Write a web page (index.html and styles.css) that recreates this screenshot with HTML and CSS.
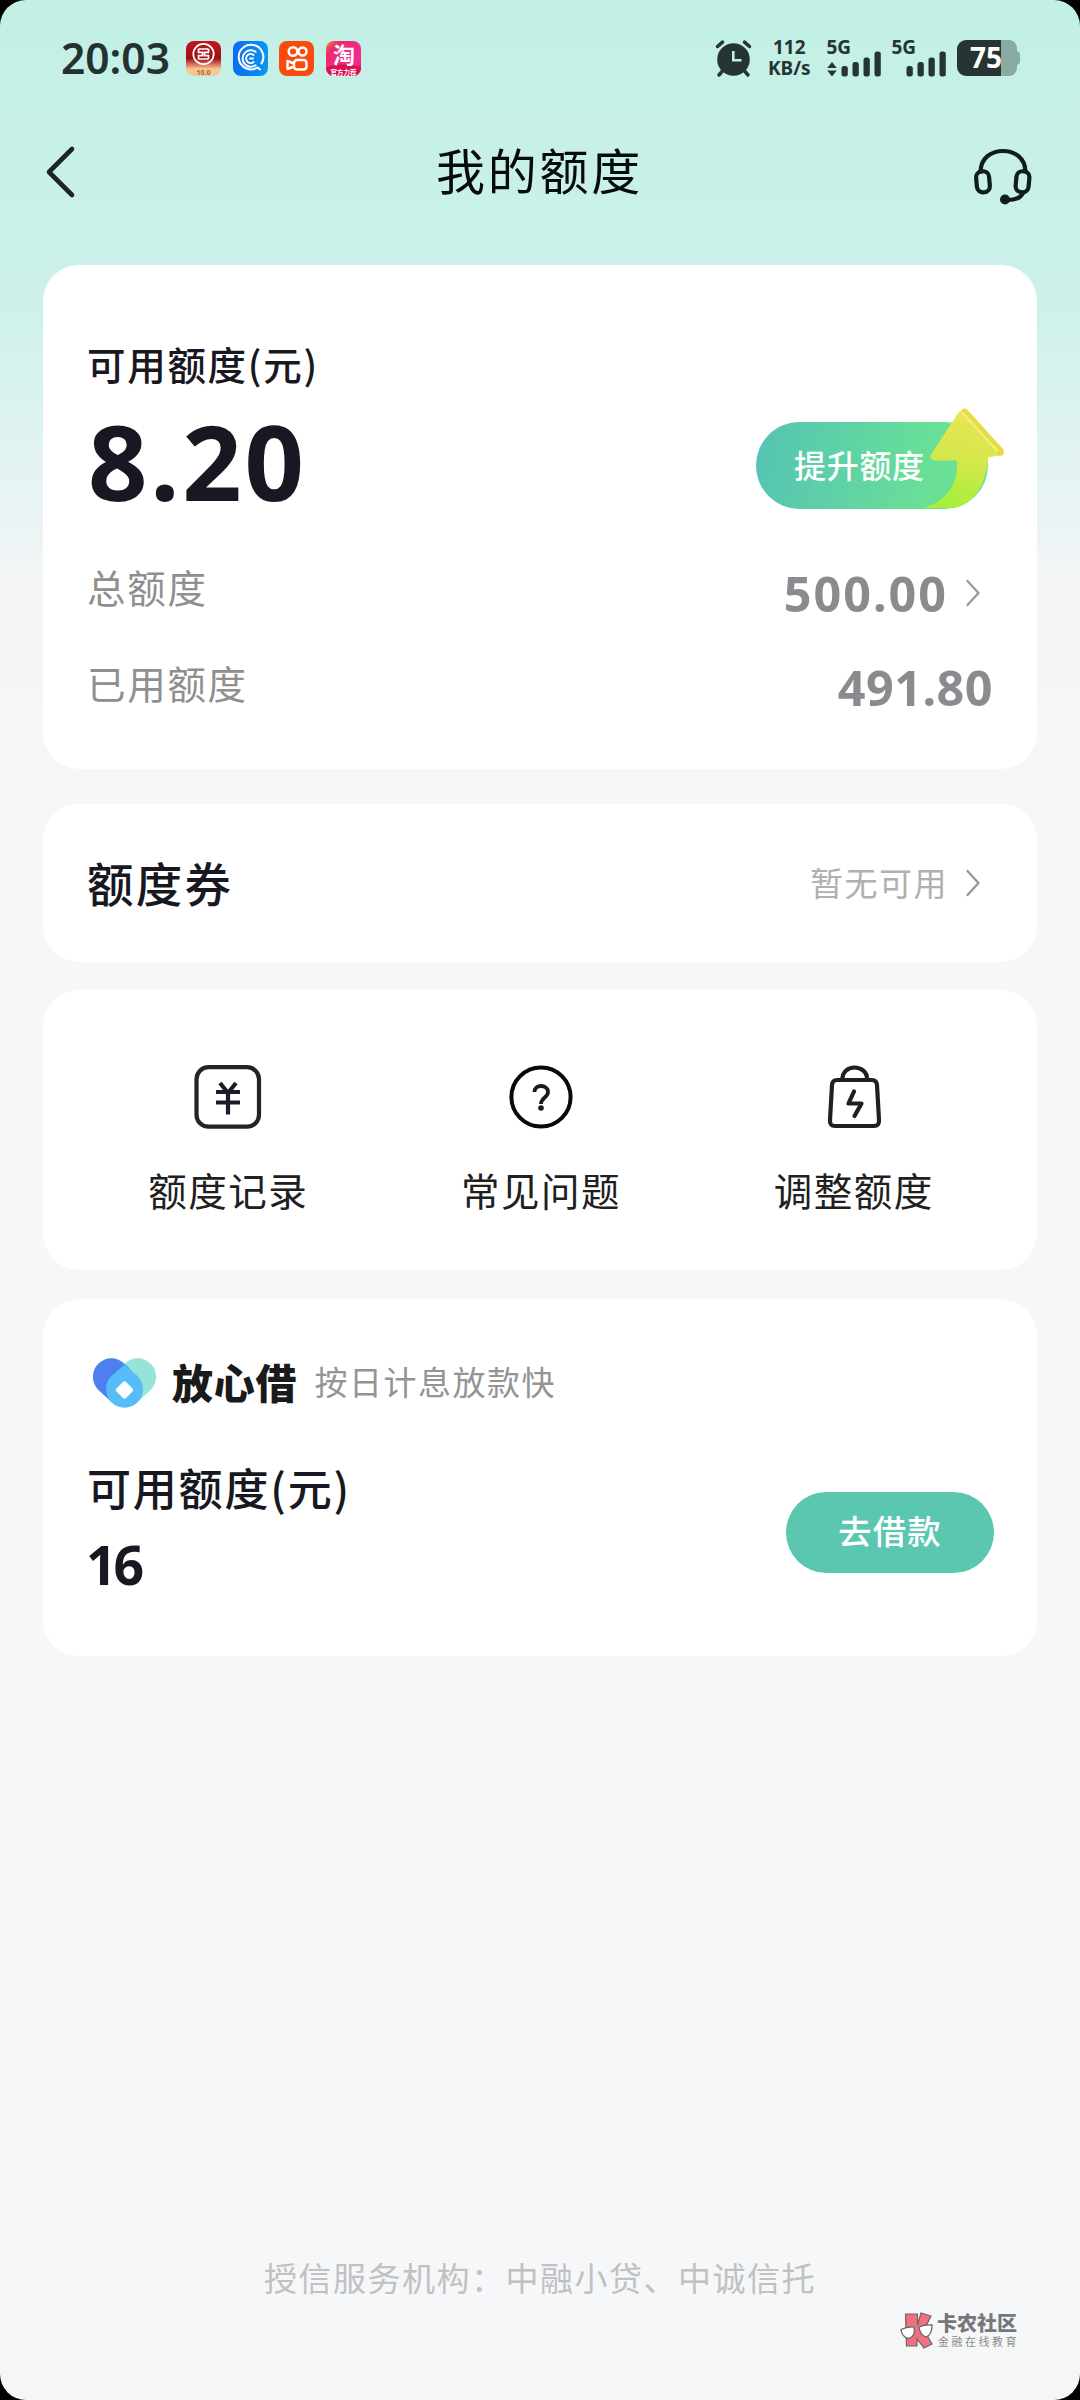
FILE: index.html
```html
<!DOCTYPE html>
<html lang="zh-CN">
<head>
<meta charset="utf-8">
<title>我的额度</title>
<link rel="stylesheet" href="styles.css">
</head>
<body>
<div class="backdrop">
<main class="screen">
  <header class="status">
    <span class="clock">20:03</span>
    <div class="apps">
      <svg class="app" viewBox="0 0 35 35">
        <defs>
          <linearGradient id="icbc" x1="0" y1="0" x2="0" y2="1"><stop offset="0" stop-color="#c3161d"/><stop offset=".5" stop-color="#9c1014"/><stop offset=".68" stop-color="#dd7a60"/><stop offset=".8" stop-color="#f6c795"/></linearGradient>
        </defs>
        <rect width="35" height="35" rx="8" fill="url(#icbc)"/>
        <circle cx="17.500" cy="13" r="10.200" fill="none" stroke="#fff" stroke-width="1.800"/>
        <path d="M12.500 8h10M12.500 18h10M12.500 8v3.400h4v3.200h-4V18M22.500 8v3.400h-4v3.200h4V18" fill="none" stroke="#fff" stroke-width="1.700"/>
        <text x="17.500" y="33.500" text-anchor="middle" class="app-badge">10.0</text>
      </svg>
      <svg class="app" viewBox="0 0 35 35">
        <defs><linearGradient id="blue"><stop offset="0" stop-color="#0a6cf0"/><stop offset="1" stop-color="#0b96ee"/></linearGradient></defs>
        <rect width="35" height="35" rx="8" fill="url(#blue)"/>
        <g fill="none" stroke="#fff" stroke-width="2" stroke-linecap="round">
          <path d="M27 28.500l-2.500-2A12.300 12.300 0 1 1 28.500 22.500"/>
          <path d="M22.500 10.800A8.200 8.200 0 1 0 22.500 24.200"/>
          <path d="M20.500 14A4.500 4.500 0 1 0 20.500 21M17 17.500h3"/>
        </g>
      </svg>
      <svg class="app" viewBox="0 0 35 35">
        <rect width="35" height="35" rx="8" fill="#fa4b0c"/>
        <g fill="none" stroke="#fff" stroke-width="2.500">
          <circle cx="14" cy="10.500" r="4.300"/><circle cx="23.500" cy="10.500" r="4"/>
          <rect x="15" y="19" width="12.500" height="9.500" rx="3"/>
          <path d="M15 22.500l-6.500-2.500v8l6.500-2.500" stroke-linejoin="round"/>
        </g>
      </svg>
      <svg class="app" viewBox="0 0 35 35">
        <defs><linearGradient id="tao" x1="0" y1="0" x2="1" y2="1"><stop offset="0" stop-color="#f08a4a"/><stop offset=".2" stop-color="#ee2a6c"/><stop offset=".75" stop-color="#f02a92"/><stop offset="1" stop-color="#e01050"/></linearGradient></defs>
        <rect width="35" height="35" rx="8" fill="url(#tao)"/>
        <path d="M0 26q17-5 35 0v1a8 8 0 0 1-8 8H8a8 8 0 0 1-8-8z" fill="#d9114f"/>
        <text x="18" y="21.500" text-anchor="middle" class="app-tao">淘</text>
        <text x="17.500" y="33.500" text-anchor="middle" class="app-tag">官方力荐</text>
      </svg>
    </div>
    <svg class="alarm" viewBox="0 0 37 37">
      <circle cx="18.500" cy="19.500" r="16.300" fill="#263432"/>
      <g stroke="#263432" stroke-width="3.500" stroke-linecap="round"><path d="M2.500 6.500L7.500 2.200M34.500 6.500L29.500 2.200M7 31.500L4 35M30 31.500L33 35"/></g>
      <path d="M18.300 11v9.300h8.200" fill="none" stroke="#c3f0e6" stroke-width="2.600"/>
    </svg>
    <div class="speed"><span>112</span><span>KB/s</span></div>
    <svg class="signal" viewBox="0 0 55 37" fill="#263432">
      <text x="-.5" y="14" class="net">5G</text>
      <path d="M5 22l4.800 6H.2zM5 36.500l4.800-6H.2z"/>
      <rect x="14.500" y="26" width="6.300" height="10.500" rx="2.500"/><rect x="25.500" y="22" width="6.300" height="14.500" rx="2.500"/><rect x="36.500" y="17.500" width="6.300" height="19" rx="2.500"/><rect x="47.500" y="11.500" width="6.300" height="25" rx="2.500"/>
    </svg>
    <svg class="signal second" viewBox="0 0 55 37" fill="#263432">
      <text x="-.5" y="14" class="net">5G</text>
      <rect x="14.500" y="26" width="6.300" height="10.500" rx="2.500"/><rect x="25.500" y="22" width="6.300" height="14.500" rx="2.500"/><rect x="36.500" y="17.500" width="6.300" height="19" rx="2.500"/><rect x="47.500" y="11.500" width="6.300" height="25" rx="2.500"/>
    </svg>
    <svg class="battery" viewBox="0 0 63 36">
      <path d="M44 0h8a8 8 0 0 1 8 8v3q3 1 3 3v8q0 2-3 3v3a8 8 0 0 1-8 8h-8z" fill="#88aba4"/>
      <path d="M44 0H9a9 9 0 0 0-9 9v18a9 9 0 0 0 9 9h35z" fill="#263432"/>
      <text x="29" y="28" text-anchor="middle" class="level">75</text>
    </svg>
  </header>

  <nav class="topbar">
    <svg class="back" viewBox="0 0 30 52"><path d="M26 3L3 26l23 23" fill="none" stroke="#1c2424" stroke-width="4.600" stroke-linecap="round" stroke-linejoin="round"/></svg>
    <h1>我的额度</h1>
    <svg class="service" viewBox="0 0 60 58">
      <g fill="none" stroke="#0f1c20" stroke-width="4.200" stroke-linecap="round">
        <path d="M7.500 23.500C8 10 18 3 30 3s22 7 22.500 20.500"/>
        <rect x="3.500" y="23.300" width="13" height="21" rx="6" transform="rotate(-5 10 34)"/>
        <rect x="43" y="23.300" width="13" height="21" rx="6" transform="rotate(5 50 34)"/>
        <path d="M50 45c-2.500 5-8 7-15 7"/>
      </g>
      <circle cx="32" cy="51.500" r="5" fill="#0f1c20"/>
    </svg>
  </nav>

  <section class="card quota">
    <h2>可用额度(元)</h2>
    <div class="hero">
      <strong>8.20</strong>
      <div class="raise">
        <span>提升额度</span>
        <svg class="raise-arrow" viewBox="0 0 84 104">
          <defs>
            <linearGradient id="arrow" x1=".6" y1="0" x2=".4" y2="1"><stop offset="0" stop-color="#ebe553"/><stop offset=".5" stop-color="#d3e84b"/><stop offset="1" stop-color="#a4f03a"/></linearGradient>
          </defs>
          <path d="M39 3.500q3-4 7 0L81 42q3 6-3 7L68 48Z" fill="#e6dc3e"/>
          <path d="M36.500 5.500q3-3 6 .5L75.500 43q2 5-4 6.500l-5 .5C64 79 50 101 28 101H1.500C22 95 38 78 34.500 53.500L12 53.500q-5-1-3-6Z" fill="url(#arrow)"/>
          <path d="M41 6.500L75 43.500" stroke="#f1ef86" stroke-width="2" stroke-linecap="round"/>
        </svg>
      </div>
    </div>
    <div class="line total"><span>总额度</span><b>500.00</b><svg class="chev" viewBox="0 0 14 28"><path d="M1.500 2L12.500 14l-11 12"/></svg></div>
    <div class="line used"><span>已用额度</span><b>491.80</b></div>
  </section>

  <section class="card coupon">
    <h3>额度券</h3><span>暂无可用</span><svg class="chev" viewBox="0 0 14 28"><path d="M1.500 2L12.500 14l-11 12"/></svg>
  </section>

  <section class="card tools">
    <div class="tool">
      <svg viewBox="0 0 68 66">
        <rect x="2.500" y="3.200" width="62.500" height="59.500" rx="12" fill="none" stroke="#242424" stroke-width="4.200"/>
        <path d="M26 19l8 10 8-10M22 28h24M22 38.500h24M34 28v22.500" fill="none" stroke="#1b1b2b" stroke-width="4.200"/>
      </svg>
      <span>额度记录</span>
    </div>
    <div class="tool">
      <svg viewBox="0 0 68 66">
        <circle cx="34" cy="33" r="29.600" fill="none" stroke="#080808" stroke-width="4"/>
        <path d="M27.500 28c0-4 3-6 6.500-6s7 2.200 7 6c0 5.500-7 5.500-7 12" fill="none" stroke="#191923" stroke-width="3.800"/><circle cx="34" cy="44" r="2.800" fill="#191923"/>
      </svg>
      <span>常见问题</span>
    </div>
    <div class="tool">
      <svg viewBox="0 0 68 66" fill="none" stroke="#202020" stroke-width="4.200" stroke-linecap="round" stroke-linejoin="round">
        <path d="M22.500 15.500C22 8 28 3.500 34.500 3.500S47.500 8 47 15.500"/>
        <path d="M17 16h35q4.500 0 5 5l2 35q.5 6-5 6h-39q-5.500 0-5-6l2-35q.5-5 5-5z"/>
        <path d="M34 27.500l-5.500 12h13L34.500 52"/>
      </svg>
      <span>调整额度</span>
    </div>
  </section>

  <section class="card loan">
    <div class="brand">
      <svg class="logo" viewBox="0 0 64 50">
        <path d="M31.500 5.700A18.500 18.500 0 1 0 5.400 32L19 44.500 40 30z" fill="#4d7ff0"/>
        <path d="M31.500 5.700A18.500 18.500 0 1 1 57.600 32L44 44.500 31.500 30z" fill="#98e3d9"/>
        <path d="M31.500 6.500L44.500 18a18.500 18.500 0 1 1-26 0z" fill="#57bdf9"/>
        <path d="M31.500 5.700q4 3 6 6.500l-6-5-6 5q2-3.500 6-6.500z" fill="#3ba4ec"/>
        <path d="M30 24q1.500-1.500 3 0l6.500 6.500q1.500 1.500 0 3L33 40q-1.500 1.500-3 0l-6.500-6.500q-1.500-1.500 0-3z" fill="#fff"/>
      </svg>
      <b>放心借</b>
      <span>按日计息放款快</span>
    </div>
    <div class="offer">
      <div class="amount"><h3>可用额度(元)</h3><strong>16</strong></div>
      <div class="borrow">去借款</div>
    </div>
  </section>

  <footer class="org">授信服务机构：中融小贷、中诚信托</footer>

  <div class="stamp">
    <svg viewBox="0 0 34 36">
      <path d="M5.500 2h12v11L21 1l10 3-7 14 8 14-8 4-7-9v7H6.500z" fill="#f0707c" stroke="#6b6668" stroke-width="1.200"/>
      <path d="M1 17.500q6-3 13-2.500 2 9-5 11.500-7-1-8-9zM19 15q6-2.500 13-2 0 10-6 12-6-2-7-10z" fill="#fff" stroke="#6b6668" stroke-width="1.300"/>
    </svg>
    <div><b>卡农社区</b><span>金融在线教育</span></div>
  </div>
</main>
</div>
</body>
</html>
```

FILE: styles.css
```css
* { box-sizing: border-box; margin: 0; padding: 0; }
body { font-family: "Noto Sans CJK SC", sans-serif; background: #000; }
svg { display: block; flex: none; overflow: visible; }
.backdrop { width: 1080px; height: 2400px; background: #000; }
.screen {
  position: relative;
  display: flex;
  flex-direction: column;
  height: 2400px;
  padding: 0 43px;
  border-radius: 26px;
  overflow: hidden;
  background:
    linear-gradient(#f4f7f6, #f4f7f6) 0 2337px / 100% 63px no-repeat,
    linear-gradient(#c2f0e5 0, #c9f0e9 200px, #cdf1ea 300px, #f4f5f7 590px, #f5f7f9 800px);
}

/* status bar */
.status { display: flex; height: 116px; padding: 0 17px 0 18px; align-items: center; }
.clock { width: 125px; font: 600 42.500px/114px "Noto Sans", sans-serif; color: #233230; }
.apps { display: flex; gap: 11.600px; margin-right: 354px; }
.app { width: 35px; height: 35px; }
.app-badge { font: 700 7px "Noto Sans", sans-serif; fill: #a06a40; }
.app-tao { font: 700 22px "Noto Sans CJK SC", sans-serif; fill: #fff; }
.app-tag { font: 700 6.500px "Noto Sans CJK SC", sans-serif; fill: #fff; }
.alarm { width: 37px; height: 37px; }
.speed { display: flex; flex-direction: column; width: 75px; align-items: center; font: 700 19px/21.500px "Noto Sans", sans-serif; color: #263432; }
.signal { width: 55px; height: 37px; }
.signal.second { margin-left: 10px; }
.net { font: 700 19px "Noto Sans", sans-serif; }
.battery { width: 63px; height: 36px; margin-left: 10px; }
.level { font: 700 28px "Noto Sans", sans-serif; fill: #fff; }

/* title bar */
.topbar { display: grid; grid-template-columns: 60px 1fr 60px; align-items: center; justify-items: start; height: 112px; padding: 0 4px 0 3px; margin-bottom: 37px; }
.back { width: 30px; height: 52px; }
.topbar h1 { justify-self: center; margin-top: -7px; font-size: 49px; font-weight: 400; line-height: 60px; letter-spacing: 2.700px; color: #070b0b; }
.service { width: 60px; height: 58px; margin-top: 10px; }

.card { background: #fff; border-radius: 36px; padding: 0 44px; }
.chev { width: 14px; height: 28px; fill: none; stroke: #999; stroke-width: 2.400; stroke-linecap: round; stroke-linejoin: round; }

.quota { height: 504px; padding-top: 70px; }
.quota h2 { font-size: 38.500px; font-weight: 500; line-height: 56px; letter-spacing: 1.700px; color: #171821; }
.hero { display: flex; justify-content: space-between; height: 147px; }
.hero strong { font: 700 104px/140px "Noto Sans", sans-serif; letter-spacing: 2.800px; padding-left: 1px; color: #171821; }
.raise { position: relative; width: 232px; height: 87px; margin: 31px 5px 0 0; padding-left: 38px; border-radius: 44px; background: linear-gradient(100deg, #55c3b4, #69e096 75%); }
.raise span { font-size: 32px; font-weight: 500; line-height: 84px; letter-spacing: .7px; color: #fff; }
.raise-arrow { position: absolute; left: 166px; top: -15px; width: 84px; height: 104px; }
.line { display: flex; align-items: center; color: #8b8b8f; }
.line span { margin-right: auto; font-size: 38.500px; line-height: 50px; letter-spacing: 1.700px; color: #8f8f90; }
.line b { font: 700 48.500px/60px "Noto Sans", sans-serif; letter-spacing: 2px; }
.total { height: 96px; padding-right: 13px; }
.total .chev { margin: 13px 0 0 18px; }
.total b { padding-top: 14px; }
.used { height: 96px; }
.used b { padding-top: 10px; letter-spacing: .5px; }

.coupon { display: flex; align-items: center; height: 158px; margin-top: 35px; padding-right: 57px; }
.coupon h3 { margin: -2px auto 0 0; font-size: 46.500px; font-weight: 500; letter-spacing: 2.300px; line-height: 60px; color: #171821; }
.coupon span { margin: -3px 18px 0 0; font-size: 33px; line-height: 50px; letter-spacing: 1.500px; color: #b0b0b0; }

.tools { display: grid; grid-template-columns: repeat(3, 1fr); height: 280px; margin-top: 28px; padding: 74px 27px 0 29px; }
.tool { display: flex; flex-direction: column; align-items: center; gap: 31px; }
.tool svg { width: 68px; height: 66px; }
.tool span { font-size: 38.500px; line-height: 56px; letter-spacing: 1.500px; color: #202020; }

.loan { height: 357px; margin-top: 29px; padding: 54px 43px 0 44px; }
.brand { display: flex; align-items: center; padding-left: 6px; height: 55px; }
.logo { width: 64px; height: 50px; margin-top: 4px; }
.brand b { margin-left: 15px; font-size: 41px; font-weight: 900; line-height: 50px; letter-spacing: .8px; color: #1a1a1a; }
.brand span { margin-left: 17px; font-size: 33px; line-height: 50px; letter-spacing: 1.500px; color: #949494; }
.offer { display: flex; justify-content: space-between; margin-top: 48px; }
.amount h3 { font-size: 44px; font-weight: 500; line-height: 62px; letter-spacing: 1.800px; color: #171821; }
.amount strong { display: block; font: 700 53.500px/94px "Noto Sans", sans-serif; color: #171821; letter-spacing: -3px; margin-left: -1px; }
.borrow { width: 208px; height: 81px; margin-top: 36px; border-radius: 41px; background: #5bc7b1; color: #fff; text-align: center; font-size: 33.500px; font-weight: 500; line-height: 76px; letter-spacing: 1.200px; }

.org { margin-top: auto; margin-bottom: 100px; text-align: center; font-size: 33px; line-height: 46px; letter-spacing: 1.500px; color: #bfc1c3; }

/* community mark over the page corner */
.stamp { position: absolute; left: 900px; top: 2312px; display: flex; gap: 3px; }
.stamp svg { width: 34px; height: 36px; }
.stamp div { display: flex; flex-direction: column; }
.stamp b { font-size: 20px; font-weight: 900; line-height: 22px; color: #77777a; }
.stamp span { font-size: 11px; line-height: 14px; letter-spacing: 2.500px; padding-left: 1px; color: #8c8c90; }
```
